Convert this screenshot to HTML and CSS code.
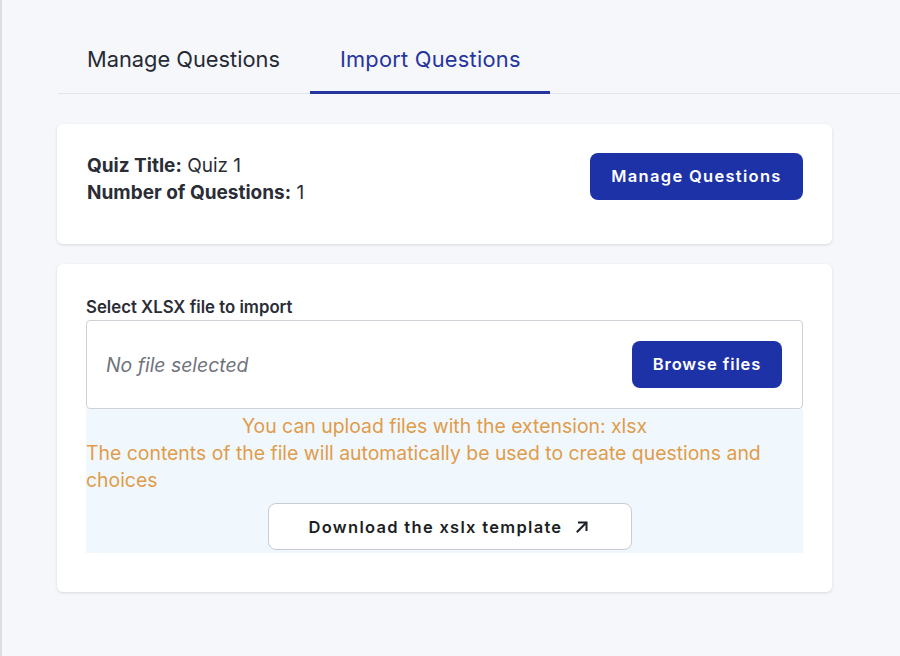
FILE: index.html
```html
<!DOCTYPE html>
<html lang="en">
<head>
<meta charset="utf-8">
<title>Import Questions</title>
<link rel="stylesheet" href="styles.css">
</head>
<body>
<div class="page">
  <nav class="tabs">
    <div class="tab">Manage Questions</div>
    <div class="tab active">Import Questions</div>
  </nav>
  <section class="card info-card">
    <div class="quiz-info">
      <div><b>Quiz Title:</b> Quiz 1</div>
      <div><b>Number of Questions:</b> 1</div>
    </div>
    <button class="btn primary manage-btn">Manage Questions</button>
  </section>
  <section class="card import-card">
    <div class="field-label">Select XLSX file to import</div>
    <div class="file-box">
      <span class="file-placeholder">No file selected</span>
      <button class="btn primary browse-btn">Browse files</button>
    </div>
    <div class="hint-area">
      <p class="hint center">You can upload files with the extension: xlsx</p>
      <p class="hint">The contents of the file will automatically be used to create questions and choices</p>
      <div class="download-row">
        <button class="btn outline download-btn">Download the xslx template
          <svg class="arrow" width="16" height="16" viewBox="0 0 16 16" fill="none" stroke="#1d1f26" stroke-width="2" stroke-linecap="square"><path d="M3.5 12.5 L12 4"/><path d="M5 3.5 H12.5 V11"/></svg>
        </button>
      </div>
    </div>
  </section>
</div>
</body>
</html>
```
FILE: styles.css
```css
* { box-sizing: border-box; }
html, body { margin: 0; padding: 0; }
body {
  background: #f6f7fb;
  font-family: Inter, "Noto Sans", sans-serif;
  color: #262a33;
  border-left: 2px solid #dcdde2;
  min-height: 656px;
}
.page {
  padding: 30px 0 0 55px;
}
.tabs {
  display: flex;
  border-bottom: 1px solid #e3e5ea;
  height: 64px;
  margin-left: 1px;
}
.tab {
  padding: 0 30px 0 29px;
  font-size: 21.8px;
  line-height: 58px;
  color: #262a33;
}
.tab.active {
  color: #25349f;
  border-bottom: 3px solid #25349f;
  margin-bottom: -1px;
  padding: 0 29px 0 30px;
  letter-spacing: 0.25px;
}
.card {
  width: 775px;
  background: #fff;
  border-radius: 6px;
  box-shadow: 0 1px 3px rgba(30, 35, 50, 0.14);
}
.info-card {
  margin-top: 30px;
  display: flex;
  align-items: center;
  justify-content: space-between;
  padding: 28px 29px 38px 30px;
}
.quiz-info {
  font-size: 19px;
  line-height: 27px;
  color: #2a2d36;
}
.quiz-info b { font-weight: 700; }
.btn {
  font-family: Inter, "Noto Sans", sans-serif;
  font-weight: 600;
  font-size: 16.5px;
  letter-spacing: 1.3px;
  border-radius: 8px;
  height: 47px;
  cursor: pointer;
}
.btn.primary {
  background: #1e32a8;
  color: #fff;
  border: none;
}
.manage-btn {
  width: 213px;
  margin-top: -6px;
}
.import-card {
  margin-top: 20px;
  padding: 33px 29px 39px 29px;
}
.field-label {
  font-size: 16.8px;
  font-weight: 600;
  line-height: 20px;
  color: #2a2d36;
  margin-bottom: 3px;
}
.file-box {
  display: flex;
  align-items: center;
  justify-content: space-between;
  height: 89px;
  border: 1px solid #cfd1d6;
  border-radius: 4px;
  padding: 0 20px 0 19px;
}
.file-placeholder {
  font-style: italic;
  font-size: 19.4px;
  color: #6f737c;
}
.browse-btn {
  width: 150px;
  margin-top: -1px;
  letter-spacing: 0.9px;
}
.hint-area {
  background: #f1f8fd;
  padding: 4px 0 3px 0;
}
.hint {
  margin: 0;
  font-size: 19.4px;
  line-height: 27px;
  color: #e09c4a;
}
.hint.center { text-align: center; }
.download-row {
  display: flex;
  justify-content: center;
  margin-top: 10px;
}
.btn.outline {
  background: #fff;
  color: #1d1f26;
  border: 1px solid #c9ccd2;
  width: 364px;
  display: inline-flex;
  align-items: center;
  justify-content: center;
  gap: 12px;
  padding: 0;
  margin-left: 10px;
  margin-top: -1px;
}
.arrow { flex: none; }
```
